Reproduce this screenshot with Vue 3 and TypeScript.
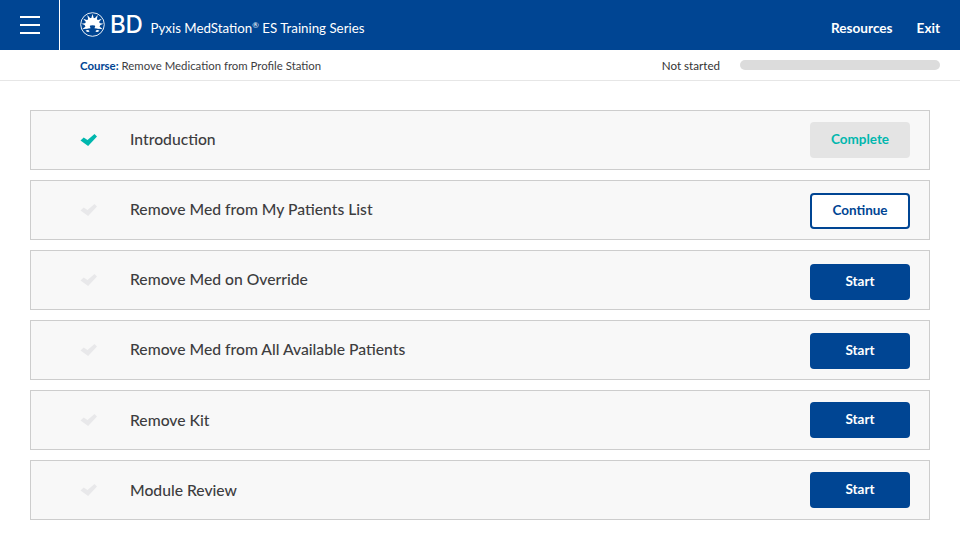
<script setup lang="ts">
interface Lesson {
  title: string
  action: string
  kind: 'done' | 'resume' | 'start'
  nudge?: string
  raised?: boolean
}

const lessons: Lesson[] = [
  { title: 'Introduction', action: 'Complete', kind: 'done', raised: true },
  { title: 'Remove Med from My Patients List', action: 'Continue', kind: 'resume', nudge: 'low1', raised: true },
  { title: 'Remove Med on Override', action: 'Start', kind: 'start', nudge: 'low2', raised: true },
  { title: 'Remove Med from All Available Patients', action: 'Start', kind: 'start', nudge: 'low1', raised: true },
  { title: 'Remove Kit', action: 'Start', kind: 'start' },
  { title: 'Module Review', action: 'Start', kind: 'start' }
]

const rays = Array.from({ length: 9 }, (_, i) => -112 + i * 28)
</script>

<template>
  <div class="page">
    <header class="topbar">
      <button class="menu" aria-label="Menu">
        <span></span><span></span><span></span>
      </button>
      <div class="brand">
        <svg class="burst" width="25" height="25" viewBox="0 0 25 25" aria-hidden="true">
          <circle cx="12.5" cy="12.5" r="11.8" fill="none" stroke="#fff" stroke-width="0.9" />
          <g fill="#fff">
            <polygon
              v-for="r in rays"
              :key="r"
              points="10.300,10 14.700,10 12.500,1.800"
              :transform="`rotate(${r} 12.5 13)`"
            />
            <path d="M4.800 13.500a7.700 7.700 0 0 1 15.400 0l-2.200 3.800c-.6-2.400-2.700-4-5.500-4s-4.900 1.600-5.500 4z" />
            <path d="M5.600 18.800c1.600-1.400 3-1 4 .5-.9 1-2.400 1-4-.5zM19.400 18.800c-1.600-1.400-3-1-4 .5.900 1 2.400 1 4-.5z" />
          </g>
        </svg>
        <span class="bd">BD</span>
        <span class="series">Pyxis MedStation<sup>®</sup> ES Training Series</span>
      </div>
      <nav class="links">
        <a>Resources</a>
        <a>Exit</a>
      </nav>
    </header>

    <div class="course">
      <p class="course-name"><b>Course:</b> Remove Medication from Profile Station</p>
      <span class="status">Not started</span>
      <div class="progress"></div>
    </div>

    <main class="list">
      <section v-for="l in lessons" :key="l.title" class="row">
        <svg class="check" :class="{ on: l.kind === 'done' }" width="18" height="14" viewBox="0 0 18 14" aria-hidden="true">
          <path d="M.5 7.500 3.700 4.500 7.500 7 14.500 1 17 3.500 8.100 13z" />
        </svg>
        <h2 class="title" :class="{ raised: l.raised }">{{ l.title }}</h2>
        <button class="btn" :class="[l.kind, l.nudge]"><span class="label">{{ l.action }}</span></button>
      </section>
    </main>
  </div>
</template>

<style>
html, body { margin: 0; background: #fff; }
</style>

<style scoped>
.page {
  width: 960px;
  height: 540px;
  overflow: hidden;
  font-family: "Lato", "Noto Sans", sans-serif;
  color: #3d3d3f;
}
.topbar {
  height: 50px;
  background: #004593;
  display: flex;
  align-items: center;
  color: #fff;
}
.menu {
  width: 60px;
  height: 50px;
  flex: none;
  padding: 0 19px 0 20px;
  background: none;
  border: 0;
  border-right: 1px solid #fff;
  box-sizing: border-box;
  display: flex;
  flex-direction: column;
  justify-content: center;
  gap: 6px;
}
.menu span { display: block; height: 2px; background: #fff; }
.brand {
  margin-left: 20px;
  display: flex;
  align-items: center;
}
.burst { display: block; margin-top: -1px; }
.bd {
  margin-left: 5px;
  font-family: "Inter", "Liberation Sans", sans-serif;
  font-size: 24px;
  font-weight: 500;
  line-height: 1;
  letter-spacing: -0.3px;
}
.series {
  margin-left: 8px;
  margin-top: 6px;
  font-size: 13.3px;
}
.series sup { font-size: 8px; line-height: 0; vertical-align: 5px; }
.links {
  margin-left: auto;
  margin-top: 6px;
  padding-right: 20px;
  display: flex;
  gap: 24px;
  font-size: 13.6px;
  font-weight: 700;
}
.course {
  height: 31px;
  box-sizing: border-box;
  border-bottom: 1px solid #e6e6e6;
  padding: 0 20px 0 80px;
  display: flex;
  align-items: center;
  font-size: 11.4px;
}
.course-name { margin: 0; flex: 1; }
.course-name b { color: #004593; font-weight: 700; }
.status { margin-right: 20px; color: #333; font-size: 11.6px; }
.progress {
  width: 200px;
  height: 10px;
  border-radius: 5px;
  background: #dcdcdc;
}
.list {
  padding: 29px 30px 0;
  display: flex;
  flex-direction: column;
  gap: 10px;
}
.row {
  height: 60px;
  box-sizing: border-box;
  border: 1px solid #cdcdcd;
  background: #f8f8f8;
  padding: 0 19px 0 49px;
  display: flex;
  align-items: center;
}
.check { flex: none; fill: #e8e8ea; }
.check.on { fill: #00b7ae; }
.title {
  margin: -1px 0 0 32px;
  flex: 1;
  font-size: 15.7px;
  font-weight: 500;
  color: #3d3d3f;
}
.title.raised { margin-top: -3px; }
.btn {
  width: 100px;
  height: 36px;
  box-sizing: border-box;
  border-radius: 4px;
  border: 0;
  padding: 0 0 2px;
  font-family: inherit;
  font-size: 13.5px;
  font-weight: 700;
}
.btn.low1 { margin-top: 2px; }
.btn.low2 { margin-top: 4px; }
.done { background: #e4e4e4; color: #00b7ae; }
.resume { background: #fff; color: #004593; border: 2px solid #004593; }
.start { background: #004593; color: #fff; }
</style>
